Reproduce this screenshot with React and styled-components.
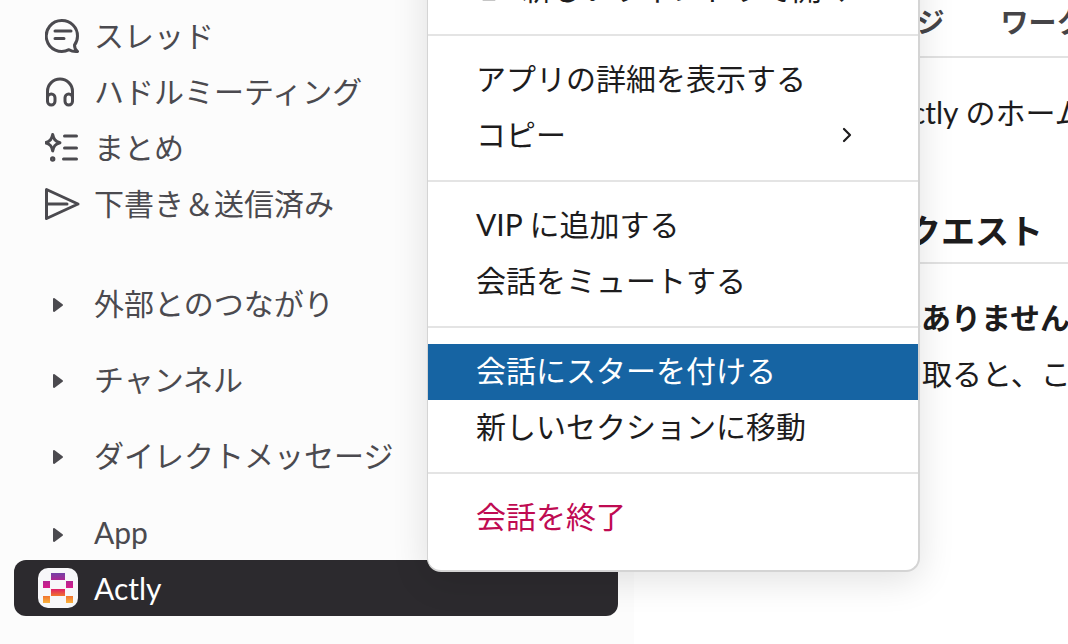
import React from 'react';
import styled, { createGlobalStyle } from 'styled-components';

const GlobalStyle = createGlobalStyle`
  html, body {
    margin: 0;
    height: 100%;
    overflow: hidden;
    background: #fff;
  }
  body {
    font-family: Lato, "Hiragino Sans", "Noto Sans CJK JP", sans-serif;
    -webkit-font-smoothing: antialiased;
  }
`;

const Page = styled.div`
  position: relative;
  display: flex;
  width: 1068px;
  height: 644px;
  overflow: hidden;
`;

const Sidebar = styled.aside`
  width: 634px;
  flex: none;
  background: #fcfcfc;
  padding-top: 6px;
  box-sizing: border-box;
`;

const NavRow = styled.div`
  display: flex;
  align-items: center;
  height: 56px;
  padding-left: 45px;
  gap: 13px;
  font-size: 30px;
  color: #4b4a4f;
  white-space: nowrap;
`;

const IconBox = styled.span`
  width: 36px;
  height: 36px;
  flex: none;
  margin-top: 4px;
  display: flex;
  align-items: center;
`;

const Sections = styled.div`
  margin-top: 44px;
`;

const SectionRow = styled.div`
  display: flex;
  align-items: center;
  height: 56px;
  margin-bottom: ${p => p.$gap ?? 20}px;
  padding-left: 52px;
  gap: 30px;
  font-size: 30px;
  color: #4b4a4f;
  white-space: nowrap;
`;

const CaretIcon = styled.svg`
  flex: none;
  margin-top: 5px;
`;

const ActiveRow = styled.div`
  display: flex;
  align-items: center;
  height: 56px;
  margin-left: 14px;
  width: 604px;
  padding-left: 24px;
  gap: 16px;
  box-sizing: border-box;
  border-radius: 12px;
  background: #2c2a2e;
  color: #fff;
  font-size: 30px;
`;

const Main = styled.main`
  flex: 1;
  min-width: 0;
  overflow: hidden;
  color: #1d1c1d;
  white-space: nowrap;
`;

const Tabs = styled.div`
  display: flex;
  align-items: center;
  gap: 56px;
  height: 58px;
  padding: 0 0 14px 171px;
  box-sizing: border-box;
  border-bottom: 2px solid #e2e2e2;
  font-size: 28px;
  font-weight: 700;
  color: #454447;
`;

const Intro = styled.div`
  margin-top: 34px;
  padding-left: 257px;
  font-size: 30px;
  line-height: 40px;
`;

const SectionHeading = styled.h2`
  margin: 78px 0 0;
  padding-left: 239px;
  height: 54px;
  font-size: 34px;
  font-weight: 700;
  line-height: 42px;
  border-bottom: 2px solid #e2e2e2;
  box-sizing: border-box;
`;

const EmptyTitle = styled.div`
  margin-top: 33px;
  padding-left: 107px;
  font-size: 30px;
  font-weight: 700;
  line-height: 40px;
`;

const EmptyText = styled.div`
  margin-top: 16px;
  padding-left: 48px;
  font-size: 30px;
  line-height: 40px;
`;

const Menu = styled.div`
  position: absolute;
  left: 427px;
  top: -62px;
  width: 493px;
  box-sizing: border-box;
  padding: 24px 0;
  background: #fff;
  border: 1px solid #d4d4d4;
  border-width: 0 2px 2px 1px;
  border-radius: 14px;
  box-shadow: 0 8px 36px rgba(0, 0, 0, 0.12);
`;

const MenuGroup = styled.div``;

const Divider = styled.div`
  height: 2px;
  margin: 16px 0;
  background: #e4e4e4;
`;

const MenuItem = styled.div`
  display: flex;
  align-items: center;
  justify-content: space-between;
  height: 56px;
  box-sizing: border-box;
  padding: 0 65px 6px 48px;
  font-size: 30px;
  white-space: nowrap;
  color: ${p => (p.$active ? '#fff' : p.$danger ? '#bf0b52' : '#1d1c1d')};
  background: ${p => (p.$active ? '#1664a3' : 'transparent')};
`;

const ItemLabel = styled.span`
  display: flex;
  align-items: center;
  gap: 16px;
`;

const ChevronIcon = styled.svg`
  margin-top: 4px;
`;

const strokeProps = {
  fill: 'none',
  stroke: '#4b4a4f',
  strokeWidth: 3,
  strokeLinecap: 'round',
  strokeLinejoin: 'round',
};

const ThreadIcon = () => (
  <svg width="36" height="36" viewBox="0 0 36 36" {...strokeProps}>
    <path d="M17 2.500A15.500 15.500 0 0 1 32.500 18c0 3.500-1 6.500-3 9 0 2.500.8 5 3 6.500-3.500.3-6.500-.5-8.500-1.800A15.500 15.500 0 1 1 17 2.500Z" />
    <path d="M10 13h16M10 20.500h9" />
  </svg>
);

const HuddleIcon = () => (
  <svg width="30" height="30" viewBox="0 0 30 30" {...strokeProps}>
    <path d="M2.500 23V14.500a12.500 12.500 0 0 1 25 0V23" transform="translate(0 0)" />
    <rect x="2.500" y="17" width="7.500" height="11" rx="3.700" />
    <rect x="20" y="17" width="7.500" height="11" rx="3.700" />
  </svg>
);

const SummaryIcon = () => (
  <svg width="36" height="30" viewBox="0 0 36 30" {...strokeProps}>
    <path d="M7.700 1.500C8.700 6 10 8.200 14.900 9.700 10 11.200 8.700 13.400 7.700 17.900 6.700 13.400 5.400 11.200.5 9.700 5.400 8.200 6.700 6 7.700 1.500Z" />
    <path d="M19.500 3h12M19.500 15h12M18.500 26h13" />
    <circle cx="7.700" cy="26" r="1.200" />
  </svg>
);

const SendIcon = () => (
  <svg width="36" height="34" viewBox="0 0 36 34" {...strokeProps}>
    <path d="M1.500 2.500 33 17 1.500 31.500Z" />
    <path d="M1.500 17H22" />
  </svg>
);

const WindowIcon = () => (
  <svg width="30" height="30" viewBox="0 0 30 30" fill="none" stroke="#1d1c1d" strokeWidth="2.500">
    <rect x="3" y="3" width="20" height="24" rx="5" />
  </svg>
);

const Chevron = () => (
  <ChevronIcon width="12" height="18" viewBox="0 0 12 18" fill="none" stroke="#1d1c1d" strokeWidth="2.200" strokeLinecap="round" strokeLinejoin="round">
    <path d="M3 3l6 6-6 6" />
  </ChevronIcon>
);

const Caret = () => (
  <CaretIcon width="12" height="16" viewBox="0 0 12 16" fill="#4b4a4f" stroke="#4b4a4f" strokeWidth="2" strokeLinejoin="round">
    <path d="M2 2 10 8 2 14Z" />
  </CaretIcon>
);

const AppLogo = () => (
  <svg width="40" height="40" viewBox="0 0 40 40" style={{ flex: 'none' }}>
    <defs>
      <linearGradient id="actlyGrad" gradientUnits="userSpaceOnUse" x1="0" y1="4" x2="0" y2="36">
        <stop offset="0" stopColor="#6a45a8" />
        <stop offset="0.25" stopColor="#ac2794" />
        <stop offset="0.5" stopColor="#d81c88" />
        <stop offset="0.56" stopColor="#e2285e" />
        <stop offset="0.74" stopColor="#f0702f" />
        <stop offset="1" stopColor="#fbbd3f" />
      </linearGradient>
    </defs>
    <rect width="40" height="40" rx="10" fill="#f7f7f9" />
    <g fill="url(#actlyGrad)">
      <rect x="13" y="5" width="14" height="7" />
      <rect x="5" y="13" width="7" height="7" />
      <rect x="28" y="13" width="7" height="7" />
      <rect x="13" y="21" width="14" height="7" />
      <rect x="5" y="28" width="7" height="7" />
      <rect x="28" y="28" width="7" height="7" />
    </g>
  </svg>
);

const navItems = [
  { label: 'スレッド', icon: <ThreadIcon /> },
  { label: 'ハドルミーティング', icon: <HuddleIcon /> },
  { label: 'まとめ', icon: <SummaryIcon /> },
  { label: '下書き＆送信済み', icon: <SendIcon /> },
];

const sections = [
  { label: '外部とのつながり' },
  { label: 'チャンネル' },
  { label: 'ダイレクトメッセージ', gap: 22 },
  { label: 'App', gap: 0 },
];

const menuGroups = [
  [{ label: '新しいウィンドウで開く', icon: <WindowIcon /> }],
  [{ label: 'アプリの詳細を表示する' }, { label: 'コピー', more: true }],
  [{ label: 'VIP に追加する' }, { label: '会話をミュートする' }],
  [{ label: '会話にスターを付ける', active: true }, { label: '新しいセクションに移動' }],
  [{ label: '会話を終了', danger: true }],
];

export default function App() {
  return (
    <Page>
      <GlobalStyle />
      <Sidebar>
        {navItems.map(item => (
          <NavRow key={item.label}>
            <IconBox>{item.icon}</IconBox>
            {item.label}
          </NavRow>
        ))}
        <Sections>
          {sections.map(s => (
            <SectionRow key={s.label} $gap={s.gap}>
              <Caret />
              {s.label}
            </SectionRow>
          ))}
          <ActiveRow>
            <AppLogo />
            Actly
          </ActiveRow>
        </Sections>
      </Sidebar>
      <Main>
        <Tabs>
          <span>メッセージ</span>
          <span>ワークフロー</span>
        </Tabs>
        <Intro>Actly のホームへようこそ</Intro>
        <SectionHeading>リクエスト</SectionHeading>
        <EmptyTitle>リクエストはありません</EmptyTitle>
        <EmptyText>リクエストを受け取ると、ここに表示されます</EmptyText>
      </Main>
      <Menu>
        {menuGroups.map((group, i) => (
          <MenuGroup key={i}>
            {i > 0 && <Divider />}
            {group.map(item => (
              <MenuItem key={item.label} $active={item.active} $danger={item.danger}>
                <ItemLabel>
                  {item.icon}
                  {item.label}
                </ItemLabel>
                {item.more && <Chevron />}
              </MenuItem>
            ))}
          </MenuGroup>
        ))}
      </Menu>
    </Page>
  );
}
